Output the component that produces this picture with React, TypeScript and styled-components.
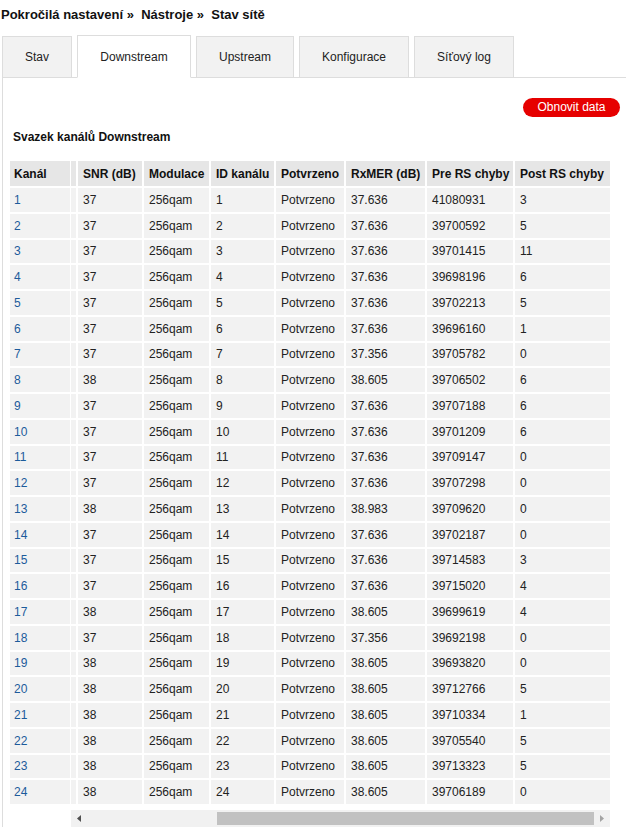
import React from "react";
import styled, { createGlobalStyle } from "styled-components";

const GlobalStyle = createGlobalStyle`
  html, body { margin: 0; padding: 0; background: #fff; }
  body {
    font-family: "Liberation Sans", Arial, sans-serif;
    font-size: 12px;
    color: #222;
  }
`;

const Page = styled.div`
  width: 626px;
  overflow: hidden;
`;

const Breadcrumb = styled.div`
  padding: 7px 0 0 1px;
  line-height: 16px;
  font-size: 13px;
  font-weight: bold;
  color: #111;
  margin-bottom: 12px;
  white-space: pre;
`;

const TabBar = styled.div`
  display: flex;
  align-items: flex-end;
  gap: 5px;
  margin-left: 2px;
  margin-bottom: -1px;
  position: relative;
  z-index: 1;
`;

const Tab = styled.div<{ $active?: boolean; $w: number }>`
  box-sizing: border-box;
  width: ${(p) => p.$w}px;
  height: ${(p) => (p.$active ? 43 : 42)}px;
  display: flex;
  align-items: center;
  justify-content: center;
  background: ${(p) => (p.$active ? "#fff" : "#f2f2f2")};
  border: 1px solid #dddddd;
  border-bottom-color: ${(p) => (p.$active ? "#fff" : "#dddddd")};
  color: #222;
  font-size: 12px;
  white-space: nowrap;
`;

const Panel = styled.div`
  margin-left: 2px;
  border-left: 1px solid #dddddd;
  border-top: 1px solid #dddddd;
  padding: 20px 6px 0 5px;
`;

const ButtonRow = styled.div`
  display: flex;
  justify-content: flex-end;
`;

const RefreshButton = styled.button`
  width: 97px;
  height: 19px;
  border: none;
  border-radius: 10px;
  background: #e60000;
  color: #fff;
  font-family: "Liberation Sans", Arial, sans-serif;
  font-size: 12px;
  line-height: 19px;
  padding: 0;
  cursor: pointer;
`;

const SectionTitle = styled.div`
  margin: 13px 0 14px 5px;
  line-height: 15px;
  font-weight: bold;
  font-size: 12px;
  color: #111;
`;

const TableArea = styled.div`
  display: flex;
  align-items: flex-start;
`;

const DataTable = styled.table<{ $width: number; $shift?: number }>`
  border-collapse: separate;
  border-spacing: 2px;
  table-layout: fixed;
  width: ${(p) => p.$width}px;
  margin-left: ${(p) => -(p.$shift || 0)}px;
  flex: none;
`;

const HeadCell = styled.th<{ $w: number; $pl?: number }>`
  box-sizing: border-box;
  width: ${(p) => p.$w}px;
  height: 25px;
  padding: 0 2px 0 ${(p) => p.$pl ?? 5}px;
  background: #e6e6e6;
  text-align: left;
  font-weight: bold;
  font-size: 12px;
  color: #111;
  white-space: nowrap;
  overflow: hidden;
`;

const Cell = styled.td<{ $pl?: number; $link?: boolean }>`
  box-sizing: border-box;
  height: 23.75px;
  padding: 0 2px 0 ${(p) => p.$pl ?? 5}px;
  background: #f2f2f2;
  font-size: 12px;
  color: ${(p) => (p.$link ? "#1c5b9b" : "#222")};
  white-space: nowrap;
  overflow: hidden;
`;

const Viewport = styled.div`
  margin-left: -1px;
  width: 539px;
  overflow: hidden;
  display: flex;
  flex-direction: column;
`;

const ScrollBar = styled.div`
  margin-top: 4px;
  height: 17px;
  background: #f1f1f1;
  display: flex;
  align-items: stretch;
`;

const ArrowBtn = styled.div`
  width: 16px;
  display: flex;
  align-items: center;
  justify-content: center;
  flex: none;
`;

const Track = styled.div`
  flex: 1;
  display: flex;
  align-items: center;
`;

const Thumb = styled.div<{ $offset: number }>`
  margin-left: ${(p) => p.$offset}px;
  flex: 1;
  height: 13px;
  background: #c1c1c1;
`;

type Row = [string, string, string, string];

const rows: Row[] = [
  ["37", "37.636", "41080931", "3"],
  ["37", "37.636", "39700592", "5"],
  ["37", "37.636", "39701415", "11"],
  ["37", "37.636", "39698196", "6"],
  ["37", "37.636", "39702213", "5"],
  ["37", "37.636", "39696160", "1"],
  ["37", "37.356", "39705782", "0"],
  ["38", "38.605", "39706502", "6"],
  ["37", "37.636", "39707188", "6"],
  ["37", "37.636", "39701209", "6"],
  ["37", "37.636", "39709147", "0"],
  ["37", "37.636", "39707298", "0"],
  ["38", "38.983", "39709620", "0"],
  ["37", "37.636", "39702187", "0"],
  ["37", "37.636", "39714583", "3"],
  ["37", "37.636", "39715020", "4"],
  ["38", "38.605", "39699619", "4"],
  ["37", "37.356", "39692198", "0"],
  ["38", "38.605", "39693820", "0"],
  ["38", "38.605", "39712766", "5"],
  ["38", "38.605", "39710334", "1"],
  ["38", "38.605", "39705540", "5"],
  ["38", "38.605", "39713323", "5"],
  ["38", "38.605", "39706189", "0"],
];

/* first column is the tail of a column scrolled out of view */
const columns = [
  { key: "hidden", label: "", w: 10 },
  { key: "snr", label: "SNR (dB)", w: 64 },
  { key: "mod", label: "Modulace", w: 65 },
  { key: "id", label: "ID kanálu", w: 63 },
  { key: "lock", label: "Potvrzeno", w: 68 },
  { key: "mer", label: "RxMER (dB)", w: 79 },
  { key: "pre", label: "Pre RS chyby", w: 86 },
  { key: "post", label: "Post RS chyby", w: 95 },
];

const tableWidth = columns.reduce((s, c) => s + c.w, 0) + 2 * (columns.length + 1);

const tabs = [
  { label: "Stav", w: 70 },
  { label: "Downstream", w: 114 },
  { label: "Upstream", w: 98 },
  { label: "Konfigurace", w: 110 },
  { label: "Síťový log", w: 100 },
];

export default function App() {
  return (
    <Page>
      <GlobalStyle />
      <Breadcrumb>{"Pokročilá nastavení »  Nástroje »  Stav sítě"}</Breadcrumb>
      <TabBar>
        {tabs.map((t) => (
          <Tab key={t.label} $w={t.w} $active={t.label === "Downstream"}>
            {t.label}
          </Tab>
        ))}
      </TabBar>
      <Panel>
        <ButtonRow>
          <RefreshButton>Obnovit data</RefreshButton>
        </ButtonRow>
        <SectionTitle>Svazek kanálů Downstream</SectionTitle>
        <TableArea>
          <DataTable $width={64}>
            <thead>
              <tr>
                <HeadCell $w={60} $pl={4}>
                  Kanál
                </HeadCell>
              </tr>
            </thead>
            <tbody>
              {rows.map((_, i) => (
                <tr key={i}>
                  <Cell $pl={4} $link>
                    {i + 1}
                  </Cell>
                </tr>
              ))}
            </tbody>
          </DataTable>
          <Viewport>
            <DataTable $width={tableWidth} $shift={7}>
              <thead>
                <tr>
                  {columns.map((c) => (
                    <HeadCell key={c.key} $w={c.w}>
                      {c.label}
                    </HeadCell>
                  ))}
                </tr>
              </thead>
              <tbody>
                {rows.map((r, i) => (
                  <tr key={i}>
                    <Cell></Cell>
                    <Cell>{r[0]}</Cell>
                    <Cell>256qam</Cell>
                    <Cell>{i + 1}</Cell>
                    <Cell>Potvrzeno</Cell>
                    <Cell>{r[1]}</Cell>
                    <Cell>{r[2]}</Cell>
                    <Cell>{r[3]}</Cell>
                  </tr>
                ))}
              </tbody>
            </DataTable>
            <ScrollBar>
              <ArrowBtn>
                <svg width="4" height="7" viewBox="0 0 4 7">
                  <polygon points="4,0 4,7 0,3.5" fill="#505050" />
                </svg>
              </ArrowBtn>
              <Track>
                <Thumb $offset={130} />
              </Track>
              <ArrowBtn>
                <svg width="4" height="7" viewBox="0 0 4 7">
                  <polygon points="0,0 0,7 4,3.5" fill="#a3a3a3" />
                </svg>
              </ArrowBtn>
            </ScrollBar>
          </Viewport>
        </TableArea>
      </Panel>
    </Page>
  );
}
